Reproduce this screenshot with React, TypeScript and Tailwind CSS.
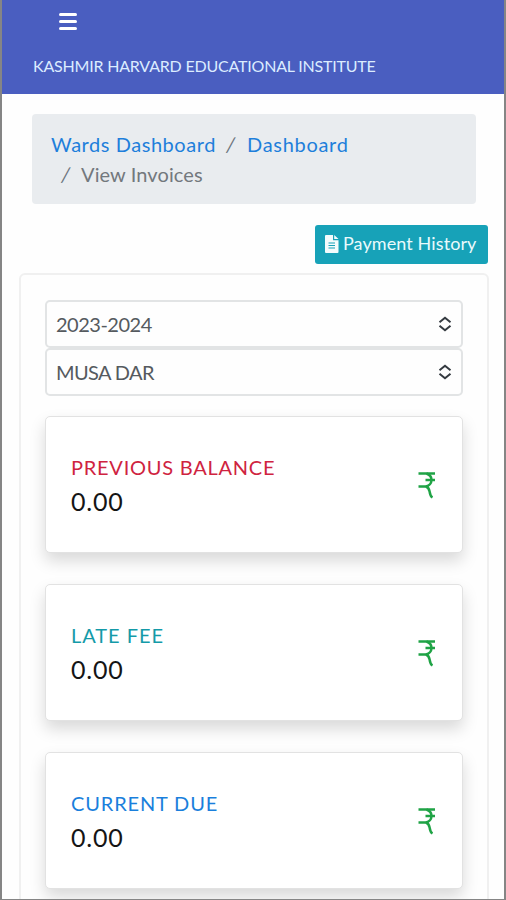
import React from 'react';

const RupeeIcon = () => (
  <svg width="20" height="28" viewBox="0 0 20 28" fill="none" stroke="#1fa345" strokeWidth="2.5">
    <path d="M1.5 2.5H18M8.5 9H18M1.5 15.5H9.5" />
    <path d="M9.5 2.5C13 3.8 14.5 6 14.5 8.8C14.5 12.2 12 15 9 15.5C12 16.5 12.2 18.5 12.7 21C13 23.2 13.3 25.3 15.5 26.5" />
  </svg>
);

const SelectIcon = () => (
  <svg width="14" height="16" viewBox="0 0 14 16" fill="none" stroke="#343a40" strokeWidth="2">
    <path d="M1.5 6.3L7 1.8L12.5 6.3M1.5 9.7L7 14.2L12.5 9.7" />
  </svg>
);

const FileIcon = () => (
  <svg width="14" height="18" viewBox="0 0 14 18" className="mb-0.5">
    <path d="M1 0H8V5.2H13.5V17Q13.5 18 12.5 18H1Q0 18 0 17V1Q0 0 1 0ZM9.2 0L13.5 4.1H9.2Z" fill="#f3fbfc" />
    <path d="M3.5 8H10M3.5 10.5H10M3.5 13H10" stroke="#17a2b8" strokeWidth="1.1" />
  </svg>
);

const Separator = () => (
  <span className="inline-block w-[10px] -skew-x-[8deg] text-center text-[#6c757d]">/</span>
);

const selects = [
  { value: '2023-2024', spacing: 'tracking-[-0.5px]' },
  { value: 'MUSA DAR', spacing: 'tracking-[-0.6px]' },
];

const balances = [
  { label: 'PREVIOUS BALANCE', amount: '0.00', color: 'text-[#cf2340] tracking-[0.75px]' },
  { label: 'LATE FEE', amount: '0.00', color: 'text-[#149aa8] tracking-[0.95px]' },
  { label: 'CURRENT DUE', amount: '0.00', color: 'text-[#1a7fdc] tracking-[0.85px]' },
];

const App = () => {
  return (
    <div className="h-[900px] w-[506px] overflow-hidden border-x-2 border-b border-[#858585] bg-[#fefefe] font-['Lato','Open_Sans',sans-serif]">
      <header className="h-[94px] bg-[#4a5ec0] pt-[13px]">
        <button className="ml-[57px] flex h-[17px] w-[18px] flex-col justify-between" aria-label="Menu">
          <span className="h-[3px] w-full rounded-sm bg-white" />
          <span className="h-[3px] w-full rounded-sm bg-white" />
          <span className="h-[3px] w-full rounded-sm bg-white" />
        </button>
        <h1 className="mt-[24px] ml-[31px] text-[16px] leading-6 tracking-[-0.2px] whitespace-nowrap text-[#dcecff]">
          KASHMIR HARVARD EDUCATIONAL INSTITUTE
        </h1>
      </header>

      <nav className="mt-[20px] ml-[30px] h-[90px] w-[444px] rounded bg-[#e9ecef] px-[19px] pt-[15px] text-[20px] leading-[30px] whitespace-nowrap">
        <div className="flex">
          <a className="w-[165px] tracking-[0.55px] text-[#1e7fdb]">Wards Dashboard</a>
          <span className="mr-[11px] ml-[10px]">
            <Separator />
          </span>
          <a className="tracking-[0.7px] text-[#1e7fdb]">Dashboard</a>
        </div>
        <div className="flex text-[#73787d]">
          <span className="mr-[10px] ml-[10px]">
            <Separator />
          </span>
          <span className="tracking-[0.1px]">View Invoices</span>
        </div>
      </nav>

      <div className="mt-[21px] flex justify-end pr-4">
        <button className="flex h-[39px] w-[173px] items-center gap-1 rounded-[3px] bg-[#17a2b8] pl-[10px] text-[18px] whitespace-nowrap text-[#eafafc]">
          <FileIcon />
          <span className="mb-0.5 tracking-[0.1px]">Payment History</span>
        </button>
      </div>

      <main className="mt-[9px] ml-[17px] h-[660px] w-[470px] rounded-md border-2 border-[#f0f0f0] px-6 pt-[25px]">
        {selects.map((select) => (
          <div
            key={select.value}
            className="flex h-[48px] w-[418px] items-center justify-between rounded-[5px] border-2 border-[#e2e4e5] pr-[9px] pl-[9px] text-[20px] text-[#555a5f]"
          >
            <span className={select.spacing}>{select.value}</span>
            <SelectIcon />
          </div>
        ))}
        <div className="mt-5 flex flex-col gap-[31px]">
          {balances.map((balance) => (
            <section
              key={balance.label}
              className="flex h-[137px] w-[418px] items-center justify-between rounded-[5px] border border-[#e2e2e2] bg-white pr-[25px] pl-[25px] shadow-[0_8px_16px_rgba(0,0,0,0.15)]"
            >
              <div className="whitespace-nowrap">
                <h2 className={`text-[20px] leading-[34px] ${balance.color}`}>{balance.label}</h2>
                <p className="text-[25px] leading-[35px] tracking-[0.8px] text-[#151515]">{balance.amount}</p>
              </div>
              <RupeeIcon />
            </section>
          ))}
        </div>
      </main>
    </div>
  );
};

export default App;
